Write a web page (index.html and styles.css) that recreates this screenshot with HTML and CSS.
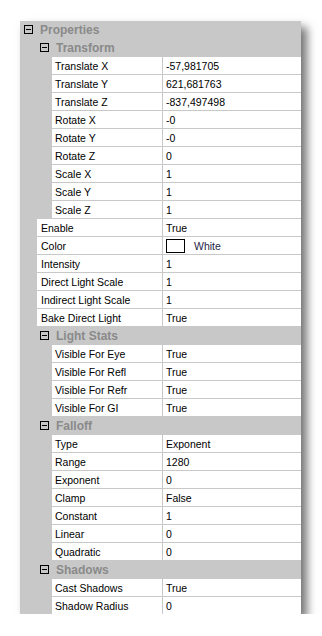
FILE: index.html
```html
<!DOCTYPE html>
<html lang="en">
<head>
    <meta charset="UTF-8">
    <title>Properties</title>
    <link rel="stylesheet" href="styles.css">
</head>
<body>
    <!-- Property grid panel -->
    <div class="grid">
        <div class="cat lvl0"><span class="toggle"></span>Properties</div>
        <div class="cat lvl1"><span class="toggle"></span>Transform</div>
        <div class="row lvl2"><div class="name">Translate X</div><div class="val">-57,981705</div></div>
        <div class="row lvl2"><div class="name">Translate Y</div><div class="val">621,681763</div></div>
        <div class="row lvl2"><div class="name">Translate Z</div><div class="val">-837,497498</div></div>
        <div class="row lvl2"><div class="name">Rotate X</div><div class="val">-0</div></div>
        <div class="row lvl2"><div class="name">Rotate Y</div><div class="val">-0</div></div>
        <div class="row lvl2"><div class="name">Rotate Z</div><div class="val">0</div></div>
        <div class="row lvl2"><div class="name">Scale X</div><div class="val">1</div></div>
        <div class="row lvl2"><div class="name">Scale Y</div><div class="val">1</div></div>
        <div class="row lvl2"><div class="name">Scale Z</div><div class="val">1</div></div>
        <div class="row lvl1"><div class="name">Enable</div><div class="val">True</div></div>
        <div class="row lvl1"><div class="name">Color</div><div class="val"><span class="swatch"></span><span class="color-name">White</span></div></div>
        <div class="row lvl1"><div class="name">Intensity</div><div class="val">1</div></div>
        <div class="row lvl1"><div class="name">Direct Light Scale</div><div class="val">1</div></div>
        <div class="row lvl1"><div class="name">Indirect Light Scale</div><div class="val">1</div></div>
        <div class="row lvl1"><div class="name">Bake Direct Light</div><div class="val">True</div></div>
        <div class="cat lvl1"><span class="toggle"></span>Light Stats</div>
        <div class="row lvl2"><div class="name">Visible For Eye</div><div class="val">True</div></div>
        <div class="row lvl2"><div class="name">Visible For Refl</div><div class="val">True</div></div>
        <div class="row lvl2"><div class="name">Visible For Refr</div><div class="val">True</div></div>
        <div class="row lvl2"><div class="name">Visible For GI</div><div class="val">True</div></div>
        <div class="cat lvl1"><span class="toggle"></span>Falloff</div>
        <div class="row lvl2"><div class="name">Type</div><div class="val">Exponent</div></div>
        <div class="row lvl2"><div class="name">Range</div><div class="val">1280</div></div>
        <div class="row lvl2"><div class="name">Exponent</div><div class="val">0</div></div>
        <div class="row lvl2"><div class="name">Clamp</div><div class="val">False</div></div>
        <div class="row lvl2"><div class="name">Constant</div><div class="val">1</div></div>
        <div class="row lvl2"><div class="name">Linear</div><div class="val">0</div></div>
        <div class="row lvl2"><div class="name">Quadratic</div><div class="val">0</div></div>
        <div class="cat lvl1"><span class="toggle"></span>Shadows</div>
        <div class="row lvl2"><div class="name">Cast Shadows</div><div class="val">True</div></div>
        <div class="row lvl2"><div class="name">Shadow Radius</div><div class="val">0</div></div>
    </div>
</body>
</html>
```
FILE: styles.css
```css
/* Page */
body {
    margin: 0;
    background-color: #fff;
    font-family: "Liberation Sans", Arial, sans-serif;
    font-size: 10.5px;
    color: #000;
}

/* Property grid panel */
.grid {
    width: 281px;
    margin: 21px 0 0 20px;
    background-color: #c8c8c8;
    box-shadow: 6px 6px 9px rgba(0, 0, 0, 0.55);
}

/* Category headers */
.cat {
    display: flex;
    align-items: center;
    height: 18px;
    font-size: 12px;
    font-weight: bold;
    color: #8a8a8a;
}

.cat.lvl0 {
    padding-left: 4px;
}

.cat.lvl1 {
    padding-left: 20px;
}

.toggle {
    position: relative;
    width: 7px;
    height: 7px;
    border: 1px solid #000;
    margin-right: 7px;
    margin-top: -1px;
}

.toggle::after {
    content: "";
    position: absolute;
    left: 1px;
    top: 3px;
    width: 5px;
    height: 1px;
    background-color: #000;
}

/* Property rows */
.row {
    display: grid;
    grid-template-columns: 142px 1fr;
    column-gap: 1px;
    height: 17px;
    padding-bottom: 1px;
}

.row:last-child {
    padding-bottom: 0;
}

.name,
.val {
    display: flex;
    align-items: center;
    background-color: #fff;
    white-space: nowrap;
    overflow: hidden;
}

.row.lvl1 .name {
    margin-left: 17px;
    padding-left: 4px;
}

.row.lvl2 .name {
    margin-left: 32px;
    padding-left: 3px;
}

.val {
    padding-left: 3px;
}

.swatch {
    width: 17px;
    height: 12px;
    border: 1px solid #000;
    background-color: #fff;
    margin-right: 9px;
}

.color-name {
    color: #1e1e48;
}
```
